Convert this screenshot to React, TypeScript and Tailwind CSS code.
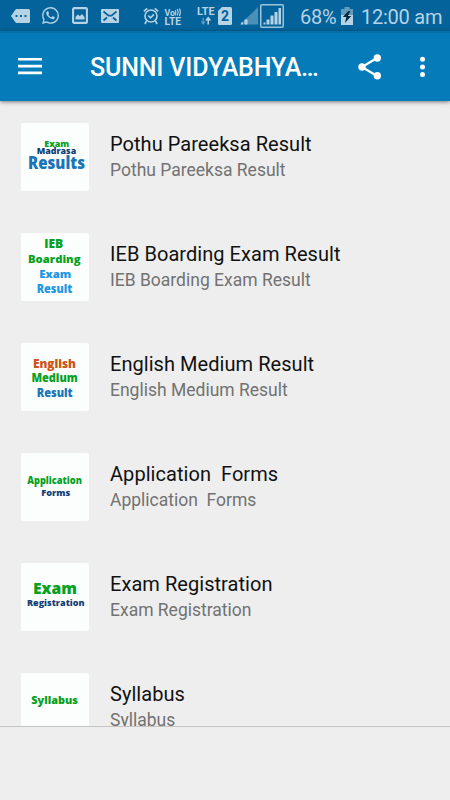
import React from "react";

type Line = { text: string; x: number; y: number; w: number; size: number; color: string };
type Item = { title: string; logo: Line[] };

const GREEN = "#06a11f";
const NAVY = "#113f75";
const BLUE = "#1974b8";
const SKY = "#2196e3";
const ORANGE = "#cc5414";

const items: Item[] = [
  {
    title: "Pothu Pareeksa Result",
    logo: [
      { text: "Exam", x: 23.3, y: 24, w: 25, size: 8.8, color: GREEN },
      { text: "Madrasa", x: 15.7, y: 31.4, w: 39.5, size: 9, color: NAVY },
      { text: "Results", x: 7, y: 45.7, w: 57, size: 17.2, color: BLUE },
    ],
  },
  {
    title: "IEB Boarding Exam Result",
    logo: [
      { text: "IEB", x: 23.2, y: 15.3, w: 19, size: 11.4, color: GREEN },
      { text: "Boarding", x: 7, y: 30.3, w: 52.5, size: 11.2, color: GREEN },
      { text: "Exam", x: 18.3, y: 45, w: 32, size: 11.2, color: SKY },
      { text: "Result", x: 15.7, y: 59.7, w: 35.5, size: 11.4, color: SKY },
    ],
  },
  {
    title: "English Medium Result",
    logo: [
      { text: "English", x: 12, y: 24.7, w: 43, size: 11.4, color: ORANGE },
      { text: "Medium", x: 10.4, y: 39.3, w: 46.4, size: 11.4, color: GREEN },
      { text: "Result", x: 15.7, y: 54, w: 36, size: 11.4, color: BLUE },
    ],
  },
  {
    title: "Application  Forms",
    logo: [
      { text: "Application", x: 6.3, y: 31, w: 54.6, size: 10, color: GREEN },
      { text: "Forms", x: 20.2, y: 43, w: 29, size: 9.2, color: NAVY },
    ],
  },
  {
    title: "Exam Registration",
    logo: [
      { text: "Exam", x: 12, y: 31, w: 44, size: 15.8, color: GREEN },
      { text: "Registration", x: 6, y: 43, w: 57.5, size: 9.2, color: NAVY },
    ],
  },
  { title: "Syllabus", logo: [{ text: "Syllabus", x: 10.3, y: 31, w: 46.7, size: 11, color: GREEN }] },
];

function Thumb({ lines }: { lines: Line[] }) {
  return (
    <div className="h-[68px] w-[68px] shrink-0 overflow-hidden rounded-[2px] bg-[#fcfefd]">
      <svg width="68" height="68" viewBox="0 0 68 68" className="font-['Open_Sans',sans-serif] font-extrabold">
        {lines.map((l) => (
          <text key={l.text} x={l.x} y={l.y} textLength={l.w} lengthAdjust="spacingAndGlyphs" fontSize={l.size} fill={l.color}>
            {l.text}
          </text>
        ))}
      </svg>
    </div>
  );
}

function StatusBar() {
  return (
    <div className="flex h-[31px] shrink-0 items-center bg-[#04639a] pl-[11px] text-[#b5d3e5]">
      <svg width="19" height="14" viewBox="0 0 19 14" className="mt-px">
        <path d="M5 0h12.5q1.5 0 1.5 1.5v11q0 1.5-1.5 1.5H5L0 7z" fill="currentColor" />
        <path d="M4.5 6h2v2h-2zM9 6h2v2H9zM13.5 6h2v2h-2z" fill="#04639a" />
      </svg>
      <svg width="17" height="17" viewBox="0 0 24 24" fill="currentColor" className="ml-3">
        <path d="M.06 24l1.69-6.16A11.87 11.87 0 0 1 .16 11.9C.16 5.33 5.5 0 12.05 0a11.82 11.82 0 0 1 8.41 3.49 11.8 11.8 0 0 1 3.48 8.4c0 6.56-5.34 11.9-11.89 11.9a11.9 11.9 0 0 1-5.69-1.45zM6.65 20.2a9.87 9.87 0 0 0 5.4 1.6c5.45 0 9.89-4.44 9.89-9.9a9.87 9.87 0 0 0-9.88-9.89 9.88 9.88 0 0 0-8.37 15.15l-1 3.65zM18 14.35c-.08-.12-.28-.2-.57-.35-.3-.15-1.76-.87-2.03-.97-.28-.1-.47-.15-.67.15-.2.3-.77.97-.94 1.17-.17.2-.35.22-.65.07-.3-.15-1.25-.46-2.39-1.47a9 9 0 0 1-1.65-2.06c-.17-.3-.02-.46.13-.6.46-.46.6-.71.75-1 .1-.2.05-.38-.03-.53L9.05 6.55c-.24-.58-.49-.5-.67-.51-.6-.02-1.12 0-1.36.29-.27.3-1.04 1.02-1.04 2.48 0 1.46 1.06 2.88 1.21 3.08.15.2 2.1 3.2 5.08 4.49 2.98 1.28 2.98.86 3.52.8.54-.04 1.75-.71 2-1.4.25-.7.25-1.29.2-1.43z" />
      </svg>
      <svg width="16" height="17" viewBox="0 0 16 17" className="ml-[13px]">
        <rect x="1.1" y="1.1" width="13.8" height="14.8" rx="1" fill="none" stroke="currentColor" strokeWidth="2.1" />
        <path d="M3.5 12.5V10L6 7.2l1.7 2L10 7l2.5 3v2.5z" fill="currentColor" />
      </svg>
      <svg width="18" height="14" viewBox="0 0 18 14" className="mt-px ml-[13px]">
        <rect width="18" height="14" rx="1" fill="currentColor" />
        <path d="M2.5 2.5l5 4.1h3l5-4.1M2.5 11.5L6 8.5M15.5 11.5L12 8.5" fill="none" stroke="#04639a" strokeWidth="1.7" />
      </svg>
      <svg width="16" height="18" viewBox="0 0 16 18" fill="none" stroke="currentColor" strokeWidth="1.6" className="ml-6">
        <circle cx="8" cy="9" r="6" />
        <path d="M.8 4.4L4.2 1.3M15.2 4.4L11.8 1.3M3.5 14l-1.6 3M12.5 14l1.6 3M5.2 8.5l2.3 2.3 3.4-3.4" />
      </svg>
      <svg width="18" height="18" viewBox="0 0 18 18" fill="currentColor" className="mt-0.5 ml-[5px] font-[Roboto,sans-serif] font-bold">
        <text x="0.5" y="7.5" fontSize="9" textLength="10.5" lengthAdjust="spacingAndGlyphs">Vo</text>
        <text x="0.5" y="17" fontSize="10" textLength="16.5" lengthAdjust="spacingAndGlyphs">LTE</text>
        <path d="M11.7 2v5.5M13.5 1q1.2 3 0 6.5M15.5 .5q1.8 3.5 0 7.5" fill="none" stroke="currentColor" strokeWidth="1.1" />
      </svg>
      <svg width="18" height="18" viewBox="0 0 18 18" className="ml-[15px] font-[Roboto,sans-serif] font-bold">
        <text x="0" y="7.8" fontSize="10.2" textLength="17.5" lengthAdjust="spacingAndGlyphs" fill="currentColor">LTE</text>
        <path d="M6.2 11v6M4.5 14.5l1.7 2.5 1.7-2.5" fill="none" stroke="#5d9dc2" strokeWidth="1.3" />
        <path d="M11.2 17.5V11M9 13.5l2.2-2.7 2.2 2.7" fill="none" stroke="currentColor" strokeWidth="1.6" />
      </svg>
      <svg width="14" height="18" viewBox="0 0 14 18" className="ml-[3px] font-[Roboto,sans-serif] font-bold">
        <path d="M4 0h8.5Q14 0 14 1.5v15q0 1.5-1.5 1.5h-11Q0 18 0 16.5V4z" fill="currentColor" />
        <text x="7" y="14" textAnchor="middle" fontSize="14" fill="#04639a">2</text>
      </svg>
      <svg width="18" height="18" viewBox="0 0 18 18" className="ml-2">
        <path d="M0 17.5L18 0v17.5z" fill="#4a8fb7" />
        <path d="M1 15.5h2v2H1zM4.5 12.5h3v5h-3z" fill="currentColor" />
      </svg>
      <svg width="24" height="24" viewBox="0 0 24 24" className="ml-0.5">
        <rect x=".75" y=".75" width="22.5" height="22.5" rx="1" fill="none" stroke="#9cc5dc" strokeWidth="1.5" />
        <path d="M3.5 18.5h2v2h-2zM6.5 15.5h3v5h-3zM10.5 11.5h3v9h-3zM14.5 8h3v12.5h-3zM18.5 4H21v16.5h-2.5z" fill="currentColor" />
      </svg>
      <span className="mt-[3px] ml-4 w-[38px] whitespace-nowrap font-[Roboto,sans-serif] text-[20px] leading-[28px] tracking-[-0.3px]">68%</span>
      <svg width="12" height="18" viewBox="0 0 12 18" className="mt-px ml-[3px]">
        <path d="M3.5 0h5v2H12v16H0V2h3.5z" fill="#619cbf" />
        <path d="M0 8h12v10H0z" fill="currentColor" />
        <path d="M7.8 3.8L1.8 10h3.6l-1.5 6L10.2 9H6.8l2.4-4.5z" fill="#04233c" />
      </svg>
      <span className="mt-[3px] ml-[8px] whitespace-pre font-[Roboto,sans-serif] text-[20px] leading-[28px] tracking-[-0.25px]">12:00 am</span>
    </div>
  );
}

function Toolbar() {
  return (
    <header className="z-10 flex h-[70px] shrink-0 items-center border-t-2 border-[#056fa9] bg-[#067bb9] pl-[18px] text-white shadow-[0_1px_4px_rgba(0,0,0,0.5)]">
      <svg width="24" height="18" viewBox="0 0 24 18" fill="currentColor">
        <path d="M0 0h24v2.6H0zM0 6.8h24v2.6H0zM0 13.6h24v2.6H0z" />
      </svg>
      <h1 className="mt-0.5 ml-12 w-[230px] whitespace-nowrap font-[Roboto,sans-serif] text-[25px] leading-[30px] font-medium tracking-[-0.15px]">SUNNI VIDYABHYA…</h1>
      <svg width="24" height="26" viewBox="0 0 24 26" fill="currentColor" className="ml-[38px]">
        <path d="M19 4L4 13l15 9" fill="none" stroke="currentColor" strokeWidth="2.2" />
        <circle cx="19.3" cy="4" r="3.7" />
        <circle cx="4" cy="13" r="3.7" />
        <circle cx="19.3" cy="21.8" r="3.7" />
      </svg>
      <svg width="6" height="22" viewBox="0 0 6 22" fill="currentColor" className="ml-[37px]">
        <circle cx="3.5" cy="3.3" r="2.5" />
        <circle cx="3.5" cy="10.9" r="2.5" />
        <circle cx="3.5" cy="18.5" r="2.5" />
      </svg>
    </header>
  );
}

export default function App() {
  return (
    <div className="flex h-[800px] w-[450px] flex-col overflow-hidden bg-[#eeeeee] font-[Roboto,sans-serif]">
      <StatusBar />
      <Toolbar />
      <main className="h-[625px] shrink-0 overflow-hidden pt-[22px]">
        {items.map((item) => (
          <div key={item.title} className="flex h-[110px] items-start pl-[21px]">
            <Thumb lines={item.logo} />
            <div className="ml-[21px] pt-2 whitespace-pre">
              <div className="text-[20px] leading-[26px] tracking-[0.05px] text-[#111111]">{item.title}</div>
              <div className="text-[17.5px] leading-[26px] text-[#727272]">{item.title}</div>
            </div>
          </div>
        ))}
      </main>
      <div className="grow border-t border-[#c4c4c4]" />
    </div>
  );
}
